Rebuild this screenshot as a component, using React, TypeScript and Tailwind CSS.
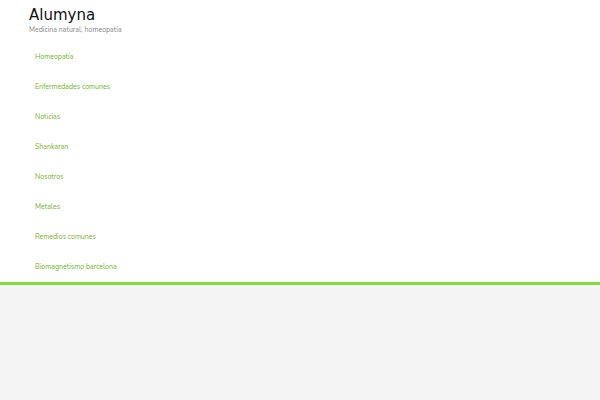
const items = ["Homeopatía", "Enfermedades comunes", "Noticias", "Shankaran", "Nosotros", "Metales", "Remedios comunes", "Biomagnetismo barcelona"];

export default function App() {
  return (
    <div className="min-h-screen bg-[#f4f4f4] font-['Nunito','DejaVu_Sans',sans-serif] antialiased">
      <header className="border-b-3 border-[#84dc3a] bg-white px-[29px] pt-1.5">
        <h1 className="font-['DejaVu_Sans',sans-serif] text-[15px] leading-[18px] text-[#111]"><a href="#">Alumyna</a></h1>
        <p className="text-[7px] leading-3 text-[#888]">Medicina natural, homeopatía</p>
        <nav className="pt-1.5">
          <ul>
            {items.map((item) => (
              <li key={item}>
                <a href="#" className="block px-1.5 text-[7px] leading-[30px] text-[#72b626]">{item}</a>
              </li>
            ))}
          </ul>
        </nav>
      </header>
    </div>
  );
}
